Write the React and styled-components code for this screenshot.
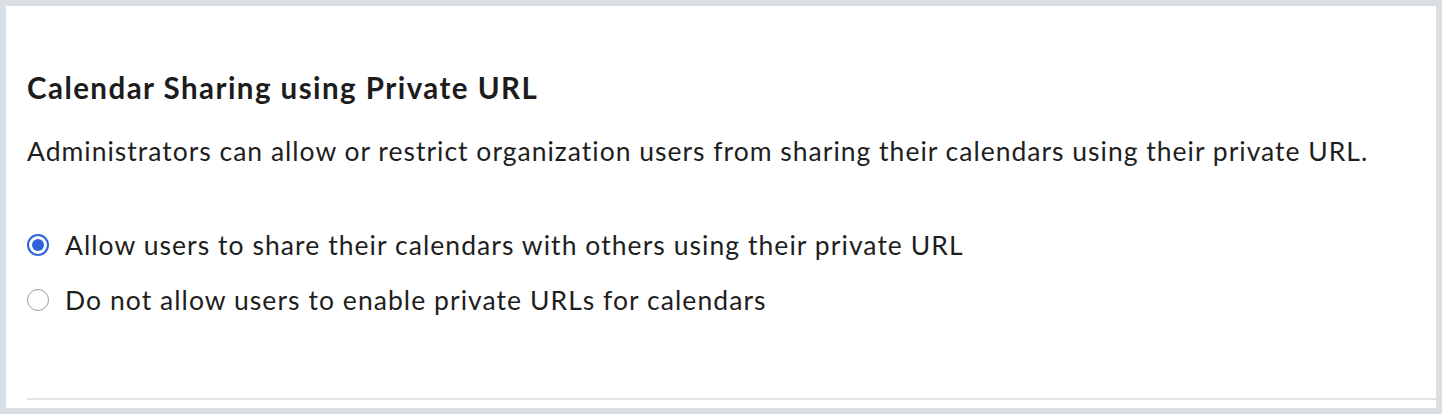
import React, { useState } from "react";
import styled, { createGlobalStyle } from "styled-components";

const Global = createGlobalStyle`
  html, body { margin: 0; padding: 0; background: #d8e0e5; }
  body { font-family: Lato, "Noto Sans", sans-serif; color: #1c1c1c; }
  * { box-sizing: border-box; }
`;

const Frame = styled.div`
  width: 1442px;
  height: 414px;
  padding: 6px;
  background: #d8e0e5;
`;

const Panel = styled.section`
  height: 100%;
  background: #fff;
  padding: 65px 0 0 21px;
  display: flex;
  flex-direction: column;
`;

const Title = styled.h2`
  margin: 0;
  font-size: 29.5px;
  font-weight: 700;
  line-height: 34px;
  letter-spacing: 1.45px;
  color: #1c1c1c;
  font-variant-ligatures: none;
`;

const Description = styled.p`
  margin: 31px 0 0;
  font-size: 26.5px;
  line-height: 30px;
  letter-spacing: 1px;
  color: #1e1e1e;
  font-variant-ligatures: none;
`;

const Options = styled.div`
  margin-top: 64px;
  display: flex;
  flex-direction: column;
  gap: 24.5px;
`;

const Option = styled.label`
  display: flex;
  align-items: center;
  gap: 16px;
  font-size: 26.5px;
  line-height: 30px;
  letter-spacing: 1.06px;
  color: #1e1e1e;
  cursor: pointer;
  font-variant-ligatures: none;
`;

const Radio = styled.span`
  width: 22px;
  height: 22px;
  border-radius: 50%;
  flex: none;
  border: ${(p) => (p.$checked ? "2px solid #2c63d8" : "1.5px solid #9e9e9e")};
  display: flex;
  align-items: center;
  justify-content: center;
  &::after {
    content: "";
    width: 12px;
    height: 12px;
    border-radius: 50%;
    background: ${(p) => (p.$checked ? "#2c63d8" : "transparent")};
  }
`;

const Spacer = styled.div`
  flex: 1;
`;

const Divider = styled.hr`
  margin: 0 0 8px;
  border: none;
  height: 2px;
  background: #e3e3e3;
`;

const choices = [
  "Allow users to share their calendars with others using their private URL",
  "Do not allow users to enable private URLs for calendars",
];

export default function App() {
  const [selected, setSelected] = useState(0);
  return (
    <>
      <Global />
      <Frame>
        <Panel>
          <Title>Calendar Sharing using Private URL</Title>
          <Description>
            Administrators can allow or restrict organization users from sharing their calendars using their private URL.
          </Description>
          <Options>
            {choices.map((text, i) => (
              <Option key={i} onClick={() => setSelected(i)}>
                <Radio $checked={selected === i} />
                {text}
              </Option>
            ))}
          </Options>
          <Spacer />
          <Divider />
        </Panel>
      </Frame>
    </>
  );
}
